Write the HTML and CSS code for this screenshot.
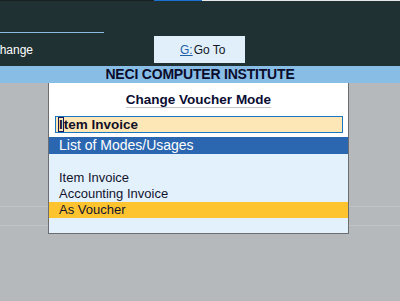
FILE: index.html
```html
<!DOCTYPE html>
<html lang="en">
<head>
  <meta charset="UTF-8">
  <meta name="viewport" content="width=device-width, initial-scale=1.0">
  <title>Change Voucher Mode</title>
  <link rel="stylesheet" href="styles.css">
</head>
<body>
  <div class="topbar">
    <div class="strip">
      <span class="strip-dark"></span>
      <span class="strip-blue"></span>
      <span class="strip-light"></span>
    </div>
    <div class="rule"></div>
    <div class="toolrow">
      <span class="menu-text">Change</span>
      <button class="goto"><span class="key">G:</span>Go To</button>
    </div>
  </div>

  <div class="company">NECI COMPUTER INSTITUTE</div>

  <div class="workspace">
    <div class="dialog">
      <div class="dialog-title"><span>Change Voucher Mode</span></div>
      <div class="field"><span class="cursor">I</span>tem Invoice</div>
      <div class="list">
        <div class="list-head">List of Modes/Usages</div>
        <ul class="options">
          <li class="blank"></li>
          <li>Item Invoice</li>
          <li>Accounting Invoice</li>
          <li class="selected">As Voucher</li>
          <li class="blank last"></li>
        </ul>
      </div>
    </div>
  </div>
</body>
</html>
```

FILE: styles.css
```css
body {
  margin: 0;
  width: 400px;
  height: 301px;
  overflow: hidden;
  font-family: "Liberation Sans", Arial, sans-serif;
  background-color: #b5b9bc;
}

/* dark header area */
.topbar {
  height: 66px;
  background-color: #1f3132;
}
.strip {
  display: flex;
  height: 1px;
}
.strip-dark {
  width: 154px;
  background-color: #1a1f20;
}
.strip-blue {
  width: 48px;
  background-color: #1a70d2;
}
.strip-light {
  flex: 1;
  background-color: #e6e8ea;
}
.rule {
  width: 104px;
  height: 1px;
  margin-top: 31px;
  background-color: #8bbde2;
}
.toolrow {
  display: grid;
  grid-template-columns: 154px 91px;
  align-items: center;
  height: 27px;
  margin-top: 3px;
}
.menu-text {
  margin-left: -9px;
  color: #ffffff;
  font-size: 12px;
}
.goto {
  height: 27px;
  padding: 0 0 0 26px;
  border: none;
  background-color: #e1effb;
  color: #111827;
  font-family: inherit;
  font-size: 12px;
  text-align: left;
}
.goto .key {
  margin-right: 1px;
  color: #1f5fa8;
  text-decoration: underline;
  text-underline-offset: 1px;
}

/* company name band */
.company {
  height: 17px;
  line-height: 17px;
  background-color: #88bde6;
  color: #0a0c2c;
  font-size: 14px;
  font-weight: bold;
  text-align: center;
  letter-spacing: -0.2px;
}

.workspace {
  height: 218px;
  background-image:
    linear-gradient(#bfc3c6, #bfc3c6),
    linear-gradient(#bfc3c6, #bfc3c6);
  background-size: 100% 1px, 100% 1px;
  background-position: 0 123px, 0 142px;
  background-repeat: no-repeat;
}
.dialog {
  width: 301px;
  margin-left: 48px;
  box-sizing: border-box;
  border: 1px solid #6b6d70;
  border-top: none;
  background-color: #ffffff;
}
.dialog-title {
  padding-top: 10px;
  line-height: 14px;
  text-align: center;
  font-size: 13.5px;
  font-weight: bold;
  color: #0b0d33;
}
.dialog-title span {
  display: inline-block;
  border-bottom: 1px solid #c4c6c8;
}
.field {
  height: 15px;
  margin: 8px 5px 0 6px;
  padding-left: 3px;
  border: 1px solid #1b78c0;
  background-color: #fde7b6;
  line-height: 15px;
  font-size: 13.5px;
  font-weight: bold;
  color: #101028;
}
.cursor {
  outline: 1px solid #14185a;
  outline-offset: -1px;
  padding: 0 1px;
  margin-left: -1px;
}

/* mode list */
.list {
  margin-top: 4px;
  background-color: #e3f1fc;
}
.list-head {
  height: 17px;
  line-height: 17px;
  padding-left: 10px;
  background-color: #2b67b1;
  color: #ffffff;
  font-size: 14px;
}
.options {
  list-style-type: none;
  margin: 0;
  padding: 0;
}
.options li {
  height: 16px;
  line-height: 16px;
  padding-left: 10px;
  font-size: 13px;
  color: #12142e;
}
.options li.selected {
  background-color: #fec42f;
}
.options li.last {
  height: 15px;
}
```
